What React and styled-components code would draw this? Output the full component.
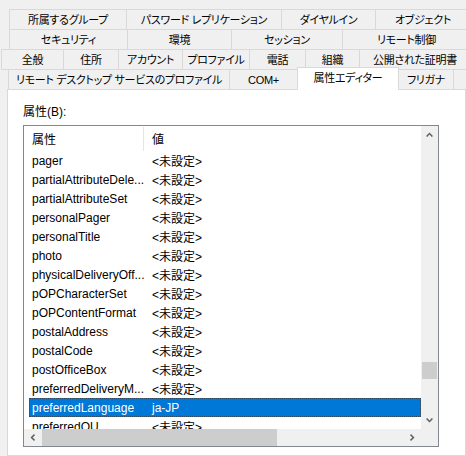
import React from "react";
import styled, { createGlobalStyle } from "styled-components";

const GlobalStyle = createGlobalStyle`
  html, body {
    margin: 0;
    padding: 0;
    background: #f0f0f0;
  }
  body {
    font-family: "Liberation Sans", "Noto Sans CJK JP", sans-serif;
    font-size: 12px;
    color: #000;
    font-feature-settings: "palt" 1;
  }
`;

const TAB_ROWS = [
  {
    offset: 9,
    tabs: [
      ["所属するグループ", 118],
      ["パスワード レプリケーション", 156],
      ["ダイヤルイン", 95],
      ["オブジェクト", 96],
    ],
  },
  {
    offset: 9,
    tabs: [
      ["セキュリティ", 119],
      ["環境", 105],
      ["セッション", 112],
      ["リモート制御", 129],
    ],
  },
  {
    offset: 1,
    tabs: [
      ["全般", 63],
      ["住所", 56],
      ["アカウント", 65],
      ["プロファイル", 68],
      ["電話", 57],
      ["組織", 55],
      ["公開された証明書", 112],
    ],
  },
  {
    offset: 8,
    tabs: [
      ["リモート デスクトップ サービスのプロファイル", 222],
      ["COM+", 69],
      ["属性エディター", 102, true],
      ["フリガナ", 56],
    ],
  },
];

const ROWS = [
  ["pager", "<未設定>"],
  ["partialAttributeDele...", "<未設定>"],
  ["partialAttributeSet", "<未設定>"],
  ["personalPager", "<未設定>"],
  ["personalTitle", "<未設定>"],
  ["photo", "<未設定>"],
  ["physicalDeliveryOff...", "<未設定>"],
  ["pOPCharacterSet", "<未設定>"],
  ["pOPContentFormat", "<未設定>"],
  ["postalAddress", "<未設定>"],
  ["postalCode", "<未設定>"],
  ["postOfficeBox", "<未設定>"],
  ["preferredDeliveryM...", "<未設定>"],
  ["preferredLanguage", "ja-JP", true],
  ["preferredOU", "<未設定>"],
];

const Chevron = ({ dir }) => {
  const pts = {
    up: "0,4 3.5,0.5 7,4 5.8,5 3.5,2.6 1.2,5",
    down: "0,1 1.2,0 3.5,2.4 5.8,0 7,1 3.5,4.5",
    left: "4,0 5,1.2 2.6,3.5 5,5.8 4,7 0.5,3.5",
    right: "1,0 4.5,3.5 1,7 0,5.8 2.4,3.5 0,1.2",
  }[dir];
  const vertical = dir === "up" || dir === "down";
  return (
    <svg width={vertical ? 7 : 5} height={vertical ? 5 : 7} viewBox={vertical ? "0 0 7 5" : "0 0 5 7"}>
      <polygon points={pts} fill="#606060" />
    </svg>
  );
};

const App = () => {
  return (
    <Window>
      <GlobalStyle />
      <TabStrip>
        {TAB_ROWS.map((row, i) => (
          <TabRow key={i} $offset={row.offset}>
            {row.tabs.map(([label, w, active]) => (
              <Tab key={label} $w={w} $active={active}>
                {label}
              </Tab>
            ))}
          </TabRow>
        ))}
      </TabStrip>
      <Panel>
        <FieldLabel>属性(B):</FieldLabel>
        <ListBox>
          <ListView>
            <HeaderRow>
              <HeaderCell $first>属性</HeaderCell>
              <HeaderCell>値</HeaderCell>
            </HeaderRow>
            {ROWS.map(([name, value, selected]) => (
              <ListRow key={name} $selected={selected}>
                <NameCell $selected={selected}>{name}</NameCell>
                <ValueCell>{value}</ValueCell>
              </ListRow>
            ))}
          </ListView>
          <VScroll>
            <ArrowBox>
              <Chevron dir="up" />
            </ArrowBox>
            <VTrack>
              <VThumb />
            </VTrack>
            <ArrowBox>
              <Chevron dir="down" />
            </ArrowBox>
          </VScroll>
          <HScroll>
            <ArrowBox>
              <Chevron dir="left" />
            </ArrowBox>
            <HTrack>
              <HThumb />
            </HTrack>
            <ArrowBox>
              <Chevron dir="right" />
            </ArrowBox>
          </HScroll>
          <Corner />
        </ListBox>
      </Panel>
    </Window>
  );
};

const Window = styled.div`
  width: 466px;
  height: 456px;
  overflow: hidden;
  background: #f0f0f0;
  display: flex;
  flex-direction: column;
`;

const TabStrip = styled.div`
  padding-top: 9px;
`;

const TabRow = styled.div`
  display: flex;
  height: 20px;
  padding-left: ${(p) => p.$offset + 1}px;
`;

const Tab = styled.div`
  box-sizing: border-box;
  flex: none;
  width: ${(p) => p.$w}px;
  height: ${(p) => (p.$active ? 23 : 21)}px;
  margin-left: -1px;
  border: 1px solid #d9d9d9;
  border-bottom: ${(p) => (p.$active ? "none" : "1px solid #d9d9d9")};
  background: ${(p) => (p.$active ? "#fff" : "#f0f0f0")};
  position: relative;
  top: ${(p) => (p.$active ? -2 : 0)}px;
  z-index: ${(p) => (p.$active ? 2 : 0)};
  display: flex;
  align-items: center;
  justify-content: center;
  padding-bottom: ${(p) => (p.$active ? 2 : 0)}px;
  white-space: nowrap;
  font-size: 11px;
  letter-spacing: -0.3px;
  line-height: 16px;
`;

const Panel = styled.div`
  flex: 1;
  margin-left: 7px;
  width: 459px;
  box-sizing: border-box;
  border: 1px solid #d9d9d9;
  background: #fff;
  padding: 14px 0 0 15px;
`;

const FieldLabel = styled.div`
  line-height: 16px;
  height: 16px;
`;

const ListBox = styled.div`
  margin-top: 5px;
  width: 416px;
  height: 322px;
  box-sizing: border-box;
  border: 1px solid #828790;
  display: grid;
  grid-template-columns: 1fr 17px;
  grid-template-rows: 1fr 17px;
  overflow: hidden;
`;

const ListView = styled.div`
  overflow: hidden;
  background: #fff;
`;

const HeaderRow = styled.div`
  display: flex;
  height: 25px;
  align-items: stretch;
`;

const HeaderCell = styled.div`
  box-sizing: border-box;
  width: ${(p) => (p.$first ? "120px" : "auto")};
  flex: ${(p) => (p.$first ? "none" : 1)};
  padding-left: 8px;
  display: flex;
  align-items: center;
  border-right: ${(p) => (p.$first ? "1px solid #e5e5e5" : "none")};
  margin: 1px 0 0;
  padding-bottom: 1px;
`;

const ListRow = styled.div`
  display: flex;
  height: 19px;
  align-items: center;
  box-sizing: border-box;
  margin-left: ${(p) => (p.$selected ? 5 : 0)}px;
  background: ${(p) => (p.$selected ? "#0078d7" : "transparent")};
  color: ${(p) => (p.$selected ? "#fff" : "#000")};
  outline: ${(p) => (p.$selected ? "1px dotted #2b4a66" : "none")};
  outline-offset: -1px;
  white-space: nowrap;
`;

const NameCell = styled.div`
  box-sizing: border-box;
  flex: none;
  width: ${(p) => (p.$selected ? 115 : 120)}px;
  padding-left: ${(p) => (p.$selected ? 3 : 8)}px;
  overflow: hidden;
`;

const ValueCell = styled.div`
  padding-left: 8px;
`;

const VScroll = styled.div`
  background: #f0f0f0;
  display: flex;
  flex-direction: column;
`;

const ArrowBox = styled.div`
  flex: none;
  width: 17px;
  height: 17px;
  display: flex;
  align-items: center;
  justify-content: center;
`;

const VTrack = styled.div`
  flex: 1;
  padding: 219px 1px 0;
`;

const VThumb = styled.div`
  height: 17px;
  background: #cdcdcd;
`;

const HScroll = styled.div`
  background: #f0f0f0;
  display: flex;
`;

const HTrack = styled.div`
  flex: 1;
  padding-left: 1px;
`;

const HThumb = styled.div`
  width: 235px;
  height: 100%;
  background: #cdcdcd;
`;

const Corner = styled.div`
  background: #f0f0f0;
`;

export default App;
